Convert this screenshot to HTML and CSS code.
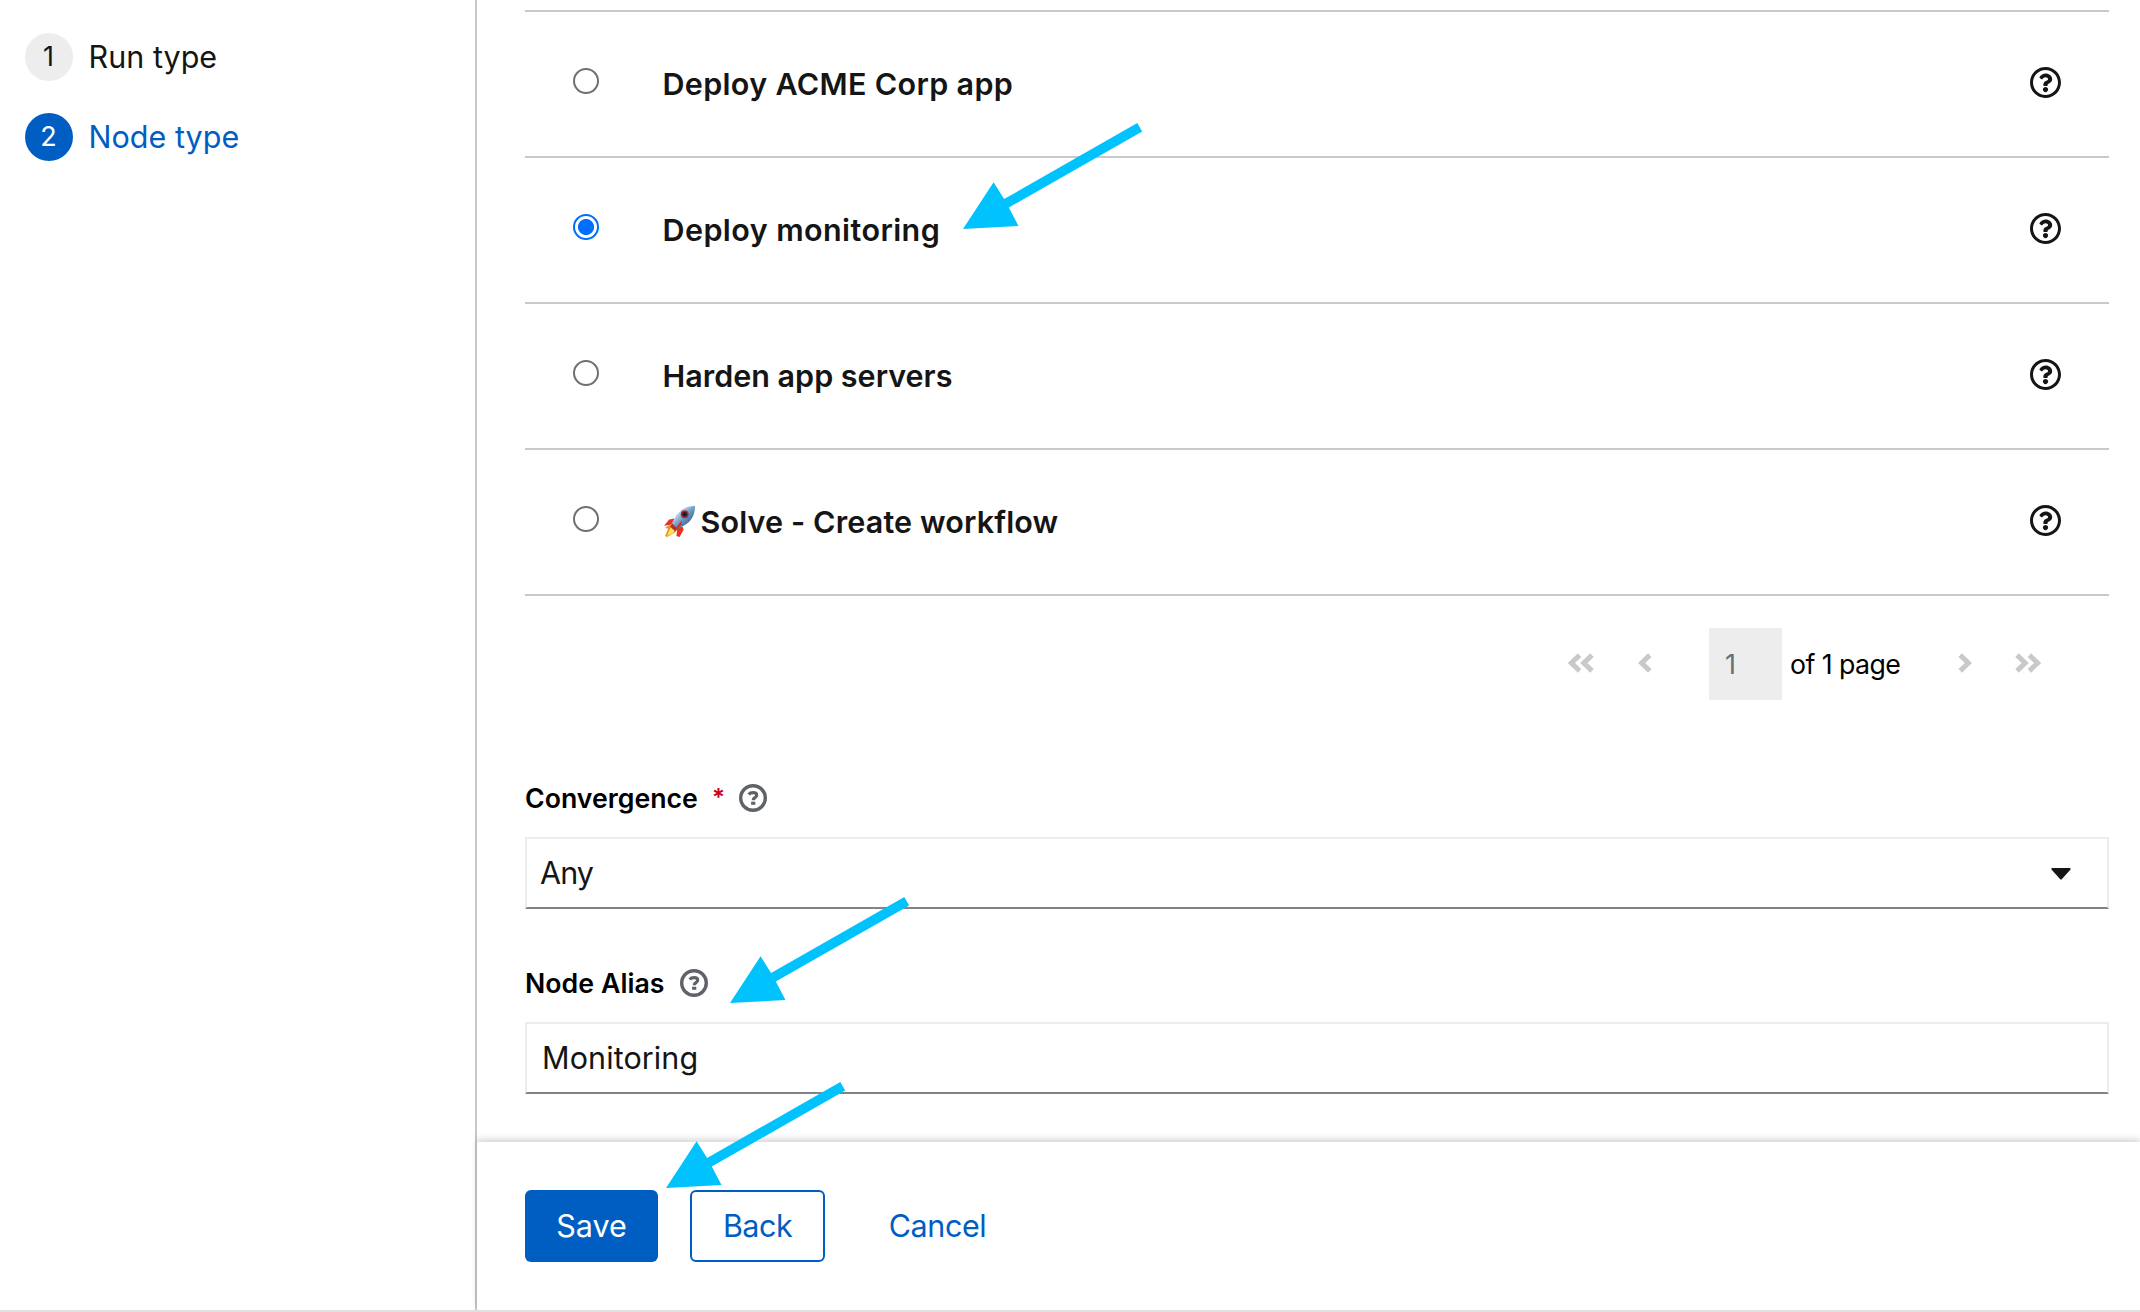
FILE: index.html
```
<!DOCTYPE html>
<html lang="en">
<head>
<meta charset="utf-8">
<title>Add node</title>
<link rel="stylesheet" href="styles.css">
</head>
<body>
<svg class="sprite" aria-hidden="true">
  <symbol id="help" viewBox="8 8 496 496"><path d="M256 8C119.043 8 8 119.083 8 256c0 136.997 111.043 248 248 248s248-111.003 248-248C504 119.083 392.957 8 256 8zm0 448c-110.532 0-200-89.431-200-200 0-110.495 89.472-200 200-200 110.491 0 200 89.471 200 200 0 110.53-89.431 200-200 200zm107.244-255.2c0 67.052-72.421 68.084-72.421 92.863V300c0 6.627-5.373 12-12 12h-45.647c-6.627 0-12-5.373-12-12v-8.659c0-35.745 27.1-50.034 47.579-61.516 17.561-9.845 28.324-16.541 28.324-29.579 0-17.246-21.999-28.693-39.784-28.693-23.189 0-33.894 10.977-48.942 29.969-4.057 5.12-11.46 6.071-16.666 2.124l-27.824-21.098c-5.107-3.872-6.251-11.066-2.644-16.363C184.846 131.491 214.94 112 261.794 112c49.071 0 101.45 38.304 101.45 88.8zM298 368c0 23.159-18.841 42-42 42s-42-18.841-42-42 18.841-42 42-42 42 18.841 42 42z"/></symbol>
  <symbol id="help-field" viewBox="0 0 28 28"><circle cx="14" cy="14" r="12.3" fill="none" stroke="currentColor" stroke-width="3.4"/><path d="M9.7 10.4C10.8 9 12.3 8.6 14.1 8.6c2.3 0 3.6 1 3.6 2.6 0 2.7-3.5 2.3-3.5 5" fill="none" stroke="currentColor" stroke-width="3.2"/><path d="M12.1 17.7h4.2v3.1h-4.2z"/></symbol>
  <symbol id="chevron" viewBox="0 0 14 20"><path d="M11.8 2.1 3.6 10l8.2 7.9" fill="none" stroke="currentColor" stroke-width="5"/></symbol>
  <symbol id="chevrons" viewBox="0 0 26 20"><path d="M11.6 2.1 3.4 10l8.2 7.9M24 2.1 15.8 10l8.2 7.9" fill="none" stroke="currentColor" stroke-width="5"/></symbol>
  <symbol id="arrow" viewBox="0 0 180 108"><path d="M0 106 30.6 59.3l10.5 16.8L174.3 0l4.9 8.5L45.8 84.6 55.5 103z"/></symbol>
</svg>

<div class="wizard">
  <nav class="steps">
    <div class="step"><span class="num">1</span><span class="step-name">Run type</span></div>
    <div class="step current"><span class="num">2</span><span class="step-name">Node type</span></div>
  </nav>

  <main class="main">
    <section class="body">
      <div class="list">
        <label class="row"><input class="radio" type="radio" name="t"><span class="name wide">Deploy ACME Corp app</span><svg class="help"><use href="#help"/></svg></label>
        <label class="row"><input class="radio" type="radio" name="t" checked><span class="name wider">Deploy monitoring</span><svg class="help"><use href="#help"/></svg></label>
        <label class="row"><input class="radio" type="radio" name="t"><span class="name">Harden app servers</span><svg class="help"><use href="#help"/></svg></label>
        <label class="row"><input class="radio" type="radio" name="t"><span class="name slight"><svg class="rocket" viewBox="0 0 32 32">
          <defs><linearGradient id="hull" x1="0" y1="0" x2="1" y2="1"><stop offset=".2" stop-color="#e3f1fb"/><stop offset=".5" stop-color="#6f9fc9"/><stop offset=".8" stop-color="#2d5f91"/></linearGradient></defs>
          <path d="M11 13 6 14 1 20l8-1zM19 21l1 3-4 7-3-1 1-9z" fill="#e8331c"/>
          <path d="M7 19 2 22l3 1-3 7 2 1 7-4 3-4z" fill="#f3901d"/>
          <path d="M8 21 5 27l-1 3 6-3 2-4z" fill="#ffe45c"/>
          <path d="M31 1c-8 0-14 3-18 9l-5 9 5 5 9-5c6-4 9-10 9-18z" fill="url(#hull)"/>
          <path d="m9 18 5 5-3 2-4-4z" fill="#a5362b"/>
          <path d="m18 15-6 8-1 4 7-8z" fill="#df2b20"/>
          <circle cx="21" cy="9" r="3.8" fill="#b3262a"/><circle cx="21" cy="9" r="2.3" fill="#16202e"/>
        </svg>Solve - Create workflow</span><svg class="help"><use href="#help"/></svg></label>
      </div>

      <div class="pager">
        <svg class="first"><use href="#chevrons"/></svg>
        <svg class="prev"><use href="#chevron"/></svg>
        <span class="page-box">1</span>
        <span class="page-of">of 1 page</span>
        <svg class="next flip"><use href="#chevron"/></svg>
        <svg class="last flip"><use href="#chevrons"/></svg>
      </div>

      <div class="field">
        <div class="label"><span>Convergence</span><span class="required">*</span><svg class="tip"><use href="#help-field"/></svg></div>
        <div class="control select"><span class="any">Any</span><svg class="caret" viewBox="0 0 20 12"><path d="M1.5 0h17c1.3 0 1.5 1 .8 1.7l-8.3 9.2c-.6.7-1.4.7-2 0L.7 1.7C0 1 .2 0 1.5 0z"/></svg></div>
      </div>
      <div class="field">
        <div class="label"><span class="alias">Node Alias</span><svg class="tip"><use href="#help-field"/></svg></div>
        <div class="control input">Monitoring</div>
      </div>
    </section>

    <footer class="footer">
      <button class="btn primary">Save</button>
      <button class="btn secondary">Back</button>
      <button class="btn link">Cancel</button>
    </footer>
  </main>

  <svg class="arrow arrow-row"><use href="#arrow"/></svg>
  <svg class="arrow arrow-alias"><use href="#arrow"/></svg>
  <svg class="arrow arrow-save"><use href="#arrow"/></svg>
</div>
</body>
</html>
```
FILE: styles.css
```
* { box-sizing: border-box; }
body { margin: 0; background: #fff; color: #151515; font-family: Inter, "Liberation Sans", sans-serif; font-size: 30.5px; line-height: 48px; }
svg { display: block; flex: none; fill: currentColor; }
.sprite { position: absolute; width: 0; height: 0; }

.wizard { position: relative; display: flex; height: 1312px; border-bottom: 2px solid #e0e0e0; overflow: hidden; }
.steps { width: 477px; flex: none; display: flex; flex-direction: column; gap: 32px; padding: 33px 25px; border-right: 2px solid #c7c7c7; }
.step { display: flex; gap: 15.5px; white-space: nowrap; }
.step-name { letter-spacing: .03px; }
.num { width: 48px; height: 48px; padding-right: 1px; border-radius: 50%; background: #ededed; text-align: center; font-size: 27px; }
.current { color: #005ec2; }
.current .num { background: #005ec2; color: #fff; }

.main { flex: 1; display: flex; flex-direction: column; min-width: 0; }
.body { flex: 1; padding: 10px 31px 0 48px; }
.list { border-top: 2px solid #c9c9c9; }
.row { height: 146px; display: flex; align-items: center; padding: 0 48px; border-bottom: 2px solid #c9c9c9; }
.radio { appearance: none; width: 26px; height: 26px; margin: 0 63.5px 6px 0; border: 2px solid #707070; border-radius: 50%; background: #fff; }
.radio:checked { border-color: #006eff; background: radial-gradient(circle, #006eff 7.6px, #fff 8.4px); }
.name { flex: 1; display: flex; align-items: center; font-weight: 600; white-space: nowrap; padding-bottom: 1px; }
.wide { letter-spacing: .32px; }
.wider { letter-spacing: .42px; }
.slight { letter-spacing: .13px; }
.rocket { width: 33px; height: 33px; margin-right: 5px; }
.help { width: 31px; height: 31px; margin: 0 .5px 3px 0; }

.pager { display: flex; align-items: center; height: 72px; margin-top: 32px; padding-left: 1043px; color: #c9c9c9; }
.first, .last { width: 26px; height: 20px; margin-bottom: 2px; }
.prev, .next { width: 14px; height: 20px; margin-bottom: 2px; }
.prev { margin-left: 44px; }
.page-box { width: 73px; height: 72px; margin-left: 57px; padding-left: 16px; background: #ededed; color: #6a6e73; font-size: 27px; line-height: 73px; }
.page-of { width: 110px; margin-left: 8px; color: #000; font-size: 26.7px; letter-spacing: -.55px; white-space: nowrap; }
.next { margin-left: 58px; }
.last { margin-left: 43px; }
.flip { transform: scaleX(-1); }

.field { margin-top: 50px; }
.pager + .field { margin-top: 74px; }
.label { display: flex; align-items: center; height: 48px; margin-bottom: 15px; color: #000; font-size: 26.7px; font-weight: 600; }
.alias { letter-spacing: .05px; }
.required { margin: 0 -1px 0 14px; color: #c9001b; font-size: 24px; }
.tip { width: 28px; height: 28px; margin-left: 15.5px; color: #5f6368; }
.control { height: 72px; display: flex; align-items: center; justify-content: space-between; border: 2px solid #ededed; border-bottom-color: #808388; padding: 0 36px 0 15px; }
.select { padding-left: 13px; }
.input { letter-spacing: .1px; }
.any { letter-spacing: -.9px; }
.caret { width: 20px; height: 12px; margin-top: 1px; }

.footer { height: 168px; padding: 48px; display: flex; gap: 32px; background: #fff; box-shadow: 0 -3px 6px rgba(0, 0, 0, .16); }
.btn { height: 72px; border: 0; border-radius: 6px; background: none; font: inherit; color: #005ec2; text-align: center; padding: 0; }
.primary { width: 133px; background: #005ec2; color: #fff; }
.secondary { width: 135px; border: 2px solid #005ec2; letter-spacing: -.5px; }
.link { width: 161px; letter-spacing: -.4px; }

.arrow { position: absolute; width: 180px; height: 108px; color: #00c2fc; }
.arrow-row { left: 963px; top: 123px; }
.arrow-alias { left: 730px; top: 897px; }
.arrow-save { left: 666px; top: 1082px; }
```
